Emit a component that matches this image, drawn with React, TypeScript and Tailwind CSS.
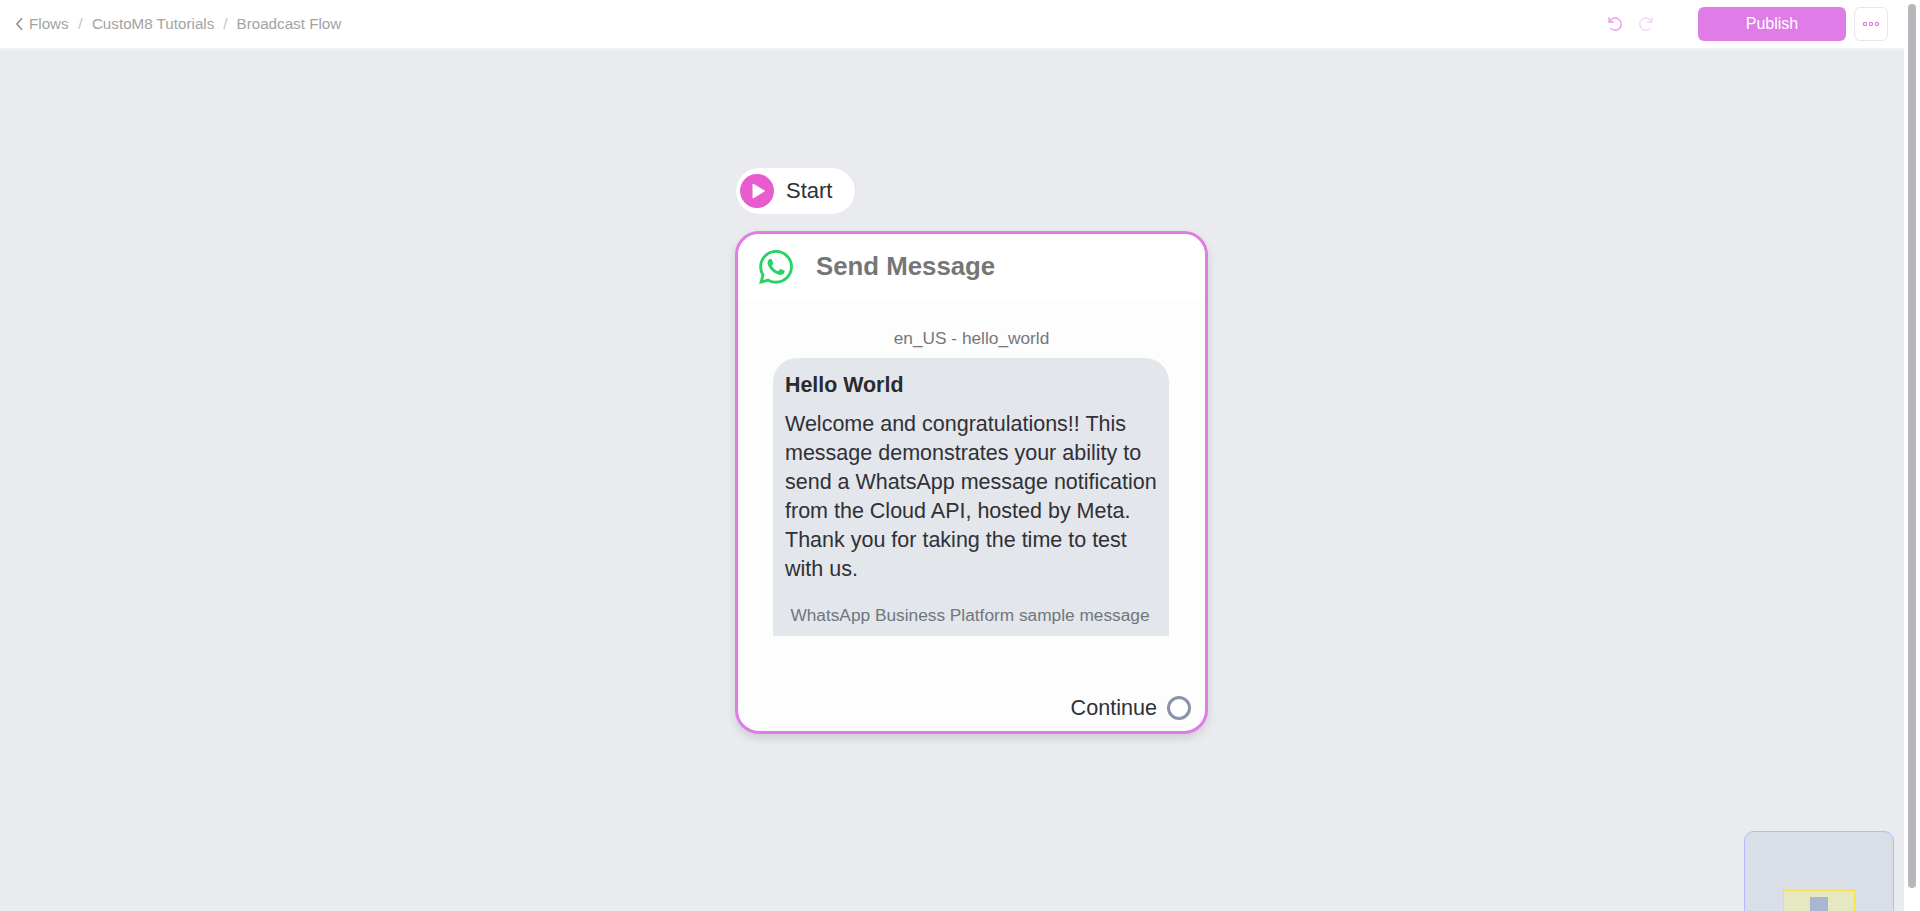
import React from "react";

function WhatsApp() {
  return (
    <svg viewBox="0 0 24 24" className="w-[34px] h-[34px]" fill="#25D366">
      <path d="M17.472 14.382c-.297-.149-1.758-.867-2.03-.967-.273-.099-.471-.148-.67.15-.197.297-.767.966-.94 1.164-.173.199-.347.223-.644.075-.297-.15-1.255-.463-2.39-1.475-.883-.788-1.48-1.761-1.653-2.059-.173-.297-.018-.458.13-.606.134-.133.298-.347.446-.52.149-.174.198-.298.298-.497.099-.198.05-.371-.025-.52-.075-.149-.669-1.612-.916-2.207-.242-.579-.487-.5-.669-.51-.173-.008-.371-.01-.57-.01-.198 0-.52.074-.792.372-.272.297-1.04 1.016-1.04 2.479 0 1.462 1.065 2.875 1.213 3.074.149.198 2.096 3.2 5.077 4.487.709.306 1.262.489 1.694.625.712.227 1.36.195 1.871.118.571-.085 1.758-.719 2.006-1.413.248-.694.248-1.289.173-1.413-.074-.124-.272-.198-.57-.347m-5.421 7.403h-.004a9.87 9.87 0 01-5.031-1.378l-.361-.214-3.741.982.998-3.648-.235-.374a9.86 9.86 0 01-1.51-5.26c.001-5.45 4.436-9.884 9.888-9.884 2.64 0 5.122 1.03 6.988 2.898a9.825 9.825 0 012.893 6.994c-.003 5.45-4.437 9.884-9.885 9.884m8.413-18.297A11.815 11.815 0 0012.05 0C5.495 0 .16 5.335.157 11.892c0 2.096.547 4.142 1.588 5.945L.057 24l6.305-1.654a11.882 11.882 0 005.683 1.448h.005c6.554 0 11.89-5.335 11.893-11.893a11.821 11.821 0 00-3.48-8.413z" />
    </svg>
  );
}

export default function App() {
  return (
    <div className="flex h-[911px] w-[1920px] overflow-hidden bg-white font-['Liberation_Sans',Arial,sans-serif]">
      <div className="flex w-[1904px] flex-col">
        <header className="flex h-[50px] shrink-0 items-center justify-between border-b-2 border-[#f0f1f3] bg-white pl-[15px] pr-[16px] text-[15.2px] text-[#a3a3a3]">
          <nav className="flex items-center">
            <svg viewBox="0 0 10 16" className="mr-[5px] h-[14px] w-[9px]" fill="none" stroke="#8f8f8f" strokeWidth="1.8">
              <path d="M8 1.5 2 8l6 6.5" />
            </svg>
            <span>Flows</span>
            <span className="mx-[9.5px] text-[#c4c4c4]">/</span>
            <span>CustoM8 Tutorials</span>
            <span className="mx-[9px] text-[#c4c4c4]">/</span>
            <span>Broadcast Flow</span>
          </nav>
          <div className="flex items-center">
            <svg viewBox="0 0 24 24" className="h-[16px] w-[16px]" fill="none" stroke="#e79aea" strokeWidth="2" strokeLinecap="round" strokeLinejoin="round">
              <path d="M3 2.5v6.5h6.5" />
              <path d="M3.6 9A9.2 9.2 0 1 1 5.5 18.5" />
            </svg>
            <svg viewBox="0 0 24 24" className="ml-[15px] h-[16px] w-[16px]" fill="none" stroke="#f6d2f7" strokeWidth="2" strokeLinecap="round" strokeLinejoin="round">
              <path d="M21 2.5v6.5h-6.5" />
              <path d="M20.4 9A9.2 9.2 0 1 0 18.5 18.5" />
            </svg>
            <button className="ml-[44px] flex h-[34px] w-[148px] items-center justify-center rounded-[6px] bg-[#df7ce8] text-[16px] text-white">
              Publish
            </button>
            <button className="ml-[8px] flex h-[34px] w-[34px] items-center justify-center rounded-[6px] border border-[#e6e6ec] bg-white">
              <svg viewBox="0 0 18 6" className="h-[6px] w-[18px]" fill="none" stroke="#df7ce8" strokeWidth="1.2">
                <circle cx="3" cy="3" r="1.6" />
                <circle cx="9" cy="3" r="1.6" />
                <circle cx="15" cy="3" r="1.6" />
              </svg>
            </button>
          </div>
        </header>

        <main className="relative flex-1 overflow-hidden bg-[#e9ebef]">
          <div className="absolute left-[736px] top-[118px] flex h-[46px] w-[119px] items-center rounded-full bg-white pl-[4px] shadow-[0_0_2px_rgba(0,0,0,0.05)]">
            <span className="flex h-[34px] w-[34px] items-center justify-center rounded-full bg-[#e85ccd]">
              <svg viewBox="0 0 13 16" className="ml-[2px] h-[16px] w-[13px]" fill="white">
                <path d="M1 1 12.5 8 1 15z" stroke="white" strokeLinejoin="round" />
              </svg>
            </span>
            <span className="mb-[1px] ml-[12px] text-[22px] leading-[26px] text-[#303038]">Start</span>
          </div>

          <section className="absolute left-[735px] top-[181px] flex h-[503px] w-[473px] flex-col overflow-hidden rounded-[24px] border-[3px] border-[#df7ce8] bg-[#fdfdfe] shadow-[0_4px_10px_rgba(0,0,0,0.12)]">
            <div className="flex h-[66px] shrink-0 items-center bg-white pb-[1px] pl-[21px]">
              <WhatsApp />
              <h2 className="ml-[23px] text-[25.8px] font-bold text-[#767676]">Send Message</h2>
            </div>
            <div className="flex flex-1 flex-col items-center">
              <p className="mt-[28px] text-[17.3px] leading-[21px] text-[#76767e]">en_US - hello_world</p>
              <div className="mt-[9px] ml-[-1px] w-[396px] rounded-t-[24px] bg-[#e3e6ea] px-[12px] pt-[14px]">
                <p className="text-[21.4px] font-bold leading-[26px] text-[#2b2b2e]">Hello World</p>
                <p className="mt-[12px] text-[21.5px] leading-[29px] text-[#303038]">
                  Welcome and congratulations!! This message demonstrates your ability to send a WhatsApp message notification from the Cloud API, hosted by Meta. Thank you for taking the time to test with us.
                </p>
                <p className="mt-[21px] pb-[10px] pr-[2px] text-center text-[17.3px] leading-[21px] text-[#71767f]">WhatsApp Business Platform sample message</p>
              </div>
            </div>
            <div className="mb-[10px] flex items-center justify-end pr-[14px]">
              <span className="text-[21.6px] leading-[26px] text-[#303038]">Continue</span>
              <span className="ml-[10px] h-[24px] w-[24px] rounded-full border-[3px] border-[#8a94a8] bg-white" />
            </div>
          </section>

          <div className="absolute left-[1744px] top-[781px] h-[130px] w-[150px] rounded-t-[10px] border border-[#b4b8ff] bg-[#dadee6]">
            <div className="ml-[38px] mt-[58px] flex h-[60px] w-[72px] justify-center border border-[#f6e04a] bg-[#e6e8c4] pt-[6px]">
              <div className="h-[16px] w-[18px] bg-[#a9b6d0]" />
            </div>
          </div>
        </main>
      </div>
      <aside className="flex flex-1 bg-white pl-[4px] pt-[4px]">
        <div className="h-[884px] w-[8px] rounded-full bg-[#b8b7bc]" />
      </aside>
    </div>
  );
}
